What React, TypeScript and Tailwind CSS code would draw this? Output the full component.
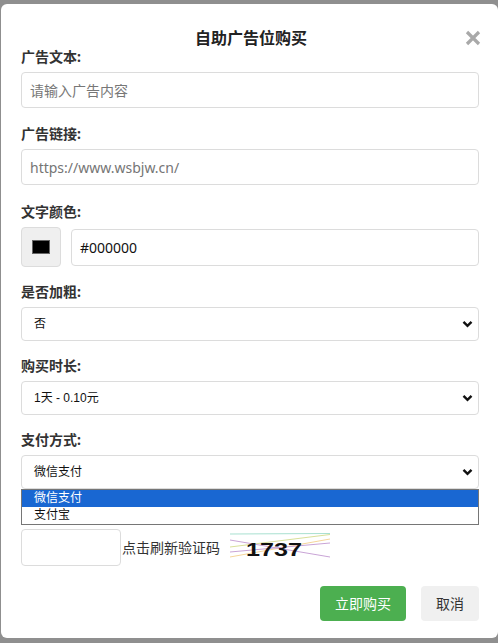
import React from "react";

const cjk = { fontFamily: '"Noto Sans", "Noto Sans CJK SC", sans-serif' };
const sel = { fontFamily: '"Liberation Sans", "Noto Sans CJK SC", sans-serif' };

function Chevron() {
  return (
    <svg width="11" height="8" viewBox="0 0 11 8" className="absolute right-[5px] top-1/2 -translate-y-1/2">
      <path d="M1.5 1.8 L5.5 5.8 L9.5 1.8" fill="none" stroke="#111" strokeWidth="2.4" />
    </svg>
  );
}

function Label({ children }: { children: React.ReactNode }) {
  return <div className="text-[14px] leading-[18px] font-bold text-[#333] mb-[6px]">{children}</div>;
}

function Select({ value }: { value: string }) {
  return (
    <div className="relative h-[34px] border border-[#dcdcdc] rounded-[4px] bg-white flex items-center pl-[12px]" style={sel}>
      <span className="text-[12px] text-[#111]">{value}</span>
      <Chevron />
    </div>
  );
}

export default function App() {
  return (
    <div className="w-[498px] h-[643px] bg-[#8f8f8f] pt-[4px] pl-[1px] overflow-hidden" style={cjk}>
      <div className="h-[634px] bg-white rounded-[6px] pl-[20px] pr-[19px] pt-[23px]">
        <div className="relative h-[22px] mb-[-1px]">
          <div className="text-center text-[16px] leading-[22px] font-bold text-[#222] pl-[2px]">自助广告位购买</div>
          <svg width="16" height="16" viewBox="0 0 16 16" className="absolute right-[-2px] top-[3px]">
            <path d="M2 2 L14 14 M14 2 L2 14" stroke="#a9a9a9" strokeWidth="3.2" strokeLinecap="butt" />
          </svg>
        </div>

        <Label>广告文本:</Label>
        <div className="h-[36px] border border-[#dcdcdc] rounded-[4px] flex items-center pl-[8px] text-[14px] text-[#777] mb-[17px]">请输入广告内容</div>

        <Label>广告链接:</Label>
        <div className="h-[36px] border border-[#dcdcdc] rounded-[4px] flex items-center pl-[8px] text-[14px] text-[#757575] mb-[18px]">https://www.wsbjw.cn/</div>

        <Label>文字颜色:</Label>
        <div className="flex items-center gap-[10px] mb-[16px]">
          <div className="w-[40px] h-[40px] bg-[#efefef] border border-[#dcdcdc] rounded-[4px] flex items-center justify-center shrink-0">
            <div className="w-[18px] h-[14px] bg-black border border-[#666]"></div>
          </div>
          <div className="flex-1 h-[37px] border border-[#dcdcdc] rounded-[4px] flex items-center pl-[8px] text-[14px] text-[#111]">#000000</div>
        </div>

        <Label>是否加粗:</Label>
        <div className="mb-[16px]"><Select value="否" /></div>

        <Label>购买时长:</Label>
        <div className="mb-[16px]"><Select value="1天 - 0.10元" /></div>

        <Label>支付方式:</Label>
        <div className="relative">
          <Select value="微信支付" />
          <div className="absolute left-0 right-0 top-[34px] border border-[#767676] bg-white z-10 text-[12px]" style={sel}>
            <div className="h-[17px] leading-[17px] bg-[#1967d2] text-white pl-[12px]">微信支付</div>
            <div className="h-[17px] leading-[17px] text-[#111] pl-[12px]">支付宝</div>
          </div>
        </div>

        <div className="flex items-center mt-[40px] h-[37px]">
          <div className="w-[100px] h-[37px] border border-[#dcdcdc] rounded-[4px] shrink-0"></div>
          <span className="text-[14px] text-[#333] ml-[1px]">点击刷新验证码</span>
          <svg width="100" height="34" viewBox="0 0 100 34" className="ml-[10px] mt-[4px]">
            <rect width="100" height="34" fill="#fff" />
            <line x1="0" y1="1" x2="100" y2="0.5" stroke="#a8e0d0" strokeWidth="1" />
            <line x1="0" y1="14" x2="100" y2="1.5" stroke="#d8e09a" strokeWidth="1" />
            <line x1="0" y1="24" x2="100" y2="6" stroke="#f5d59a" strokeWidth="1" />
            <line x1="0" y1="19" x2="100" y2="10" stroke="#c9a4d6" strokeWidth="1" />
            <line x1="0" y1="7" x2="100" y2="24" stroke="#c9a4d6" strokeWidth="1" />
            <text x="11.5" y="23" fontFamily="Liberation Sans, sans-serif" fontWeight="bold" fontSize="18" fill="#111" transform="scale(1.4,1)">1737</text>
          </svg>
        </div>

        <div className="flex justify-end gap-[15px] mt-[20px]">
          <div className="h-[35px] w-[86px] bg-[#4caf50] rounded-[4px] text-white text-[14px] flex items-center justify-center">立即购买</div>
          <div className="h-[35px] w-[58px] bg-[#f0f0f0] rounded-[4px] text-[#333] text-[14px] flex items-center justify-center">取消</div>
        </div>
      </div>
    </div>
  );
}
